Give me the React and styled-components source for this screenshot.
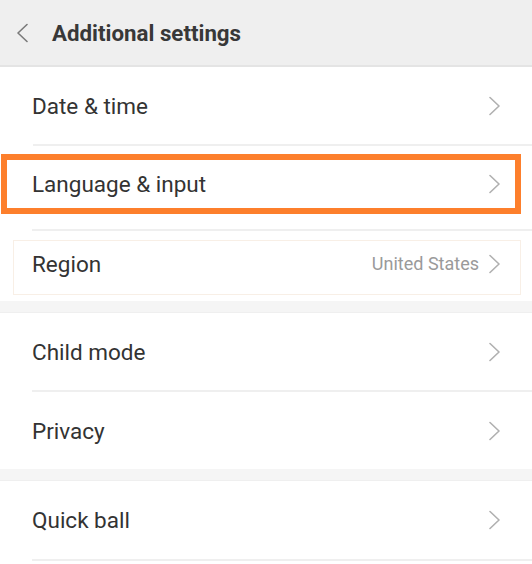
import React from "react";
import styled, { createGlobalStyle } from "styled-components";

const Global = createGlobalStyle`
  html, body { margin: 0; padding: 0; background: #ffffff; }
  body { font-family: Roboto, "Noto Sans", "Liberation Sans", sans-serif; -webkit-font-smoothing: antialiased; }
  * { box-sizing: border-box; }
`;

const Page = styled.div`
  width: 532px;
  height: 564px;
  overflow: hidden;
  background: #ffffff;
  display: flex;
  flex-direction: column;
`;

const Header = styled.header`
  height: 67px;
  flex: none;
  background: #efefef;
  border-bottom: 2px solid #e4e4e4;
  display: flex;
  align-items: center;
  padding-left: 16px;
  gap: 24px;
`;

const Title = styled.h1`
  margin: 0;
  font-size: 22.3px;
  font-weight: 700;
  color: #383838;
  letter-spacing: 0;
`;

const Section = styled.section`
  background: #ffffff;
  display: flex;
  flex-direction: column;
`;

const Gap = styled.div`
  height: 12px;
  flex: none;
  background: #f5f5f5;
  border-bottom: 1px solid #efefef;
`;

const Row = styled.div`
  height: ${(p) => p.$h}px;
  display: flex;
  align-items: center;
  padding-left: ${(p) => p.$pl ?? 32}px;
  padding-right: ${(p) => p.$pr ?? 31}px;
  padding-bottom: ${(p) => p.$pb ?? 0}px;
`;

const Label = styled.span`
  flex: 1;
  font-size: 22.5px;
  color: #333333;
`;

const Value = styled.span`
  font-size: 18px;
  color: #9a9a9a;
  margin-right: 10px;
`;

const Divider = styled.div`
  height: 2px;
  flex: none;
  margin-left: ${(p) => p.$ml ?? 32}px;
  background: #efefef;
`;

const Highlight = styled.div`
  margin: 8px 11px 0 1px;
  border: 6px solid #fd7f2c;
`;

const FaintBox = styled.div`
  margin: 9px 11px 0 13px;
  border: 1px solid #f8efe6;
`;

const Spacer = styled.div`
  height: ${(p) => p.$h}px;
  flex: none;
`;

const Chevron = ({ left }) => (
  <svg width="12" height="20" viewBox="0 0 12 20" fill="none">
    <path
      d={left ? "M11 1.5 L2 10 L11 18.5" : "M1 1.5 L10 10 L1 18.5"}
      stroke={left ? "#7a7a7a" : "#b0b0b0"}
      strokeWidth="1.6"
      strokeLinecap="round"
      strokeLinejoin="round"
    />
  </svg>
);

export default function App() {
  return (
    <>
      <Global />
      <Page>
        <Header>
          <Chevron left />
          <Title>Additional settings</Title>
        </Header>
        <Section>
          <Row $h={77}>
            <Label>Date &amp; time</Label>
            <Chevron />
          </Row>
          <Divider $ml={33} />
          <Highlight>
            <Row $h={48} $pl={25} $pr={14}>
              <Label>Language &amp; input</Label>
              <Chevron />
            </Row>
          </Highlight>
          <Spacer $h={15} />
          <Divider />
          <FaintBox>
            <Row $h={53} $pl={18} $pr={19} $pb={8}>
              <Label>Region</Label>
              <Value>United States</Value>
              <Chevron />
            </Row>
          </FaintBox>
          <Spacer $h={6} />
        </Section>
        <Gap />
        <Section>
          <Row $h={77}>
            <Label>Child mode</Label>
            <Chevron />
          </Row>
          <Divider />
          <Row $h={77}>
            <Label>Privacy</Label>
            <Chevron />
          </Row>
        </Section>
        <Gap />
        <Section>
          <Row $h={78}>
            <Label>Quick ball</Label>
            <Chevron />
          </Row>
          <Divider />
        </Section>
      </Page>
    </>
  );
}
